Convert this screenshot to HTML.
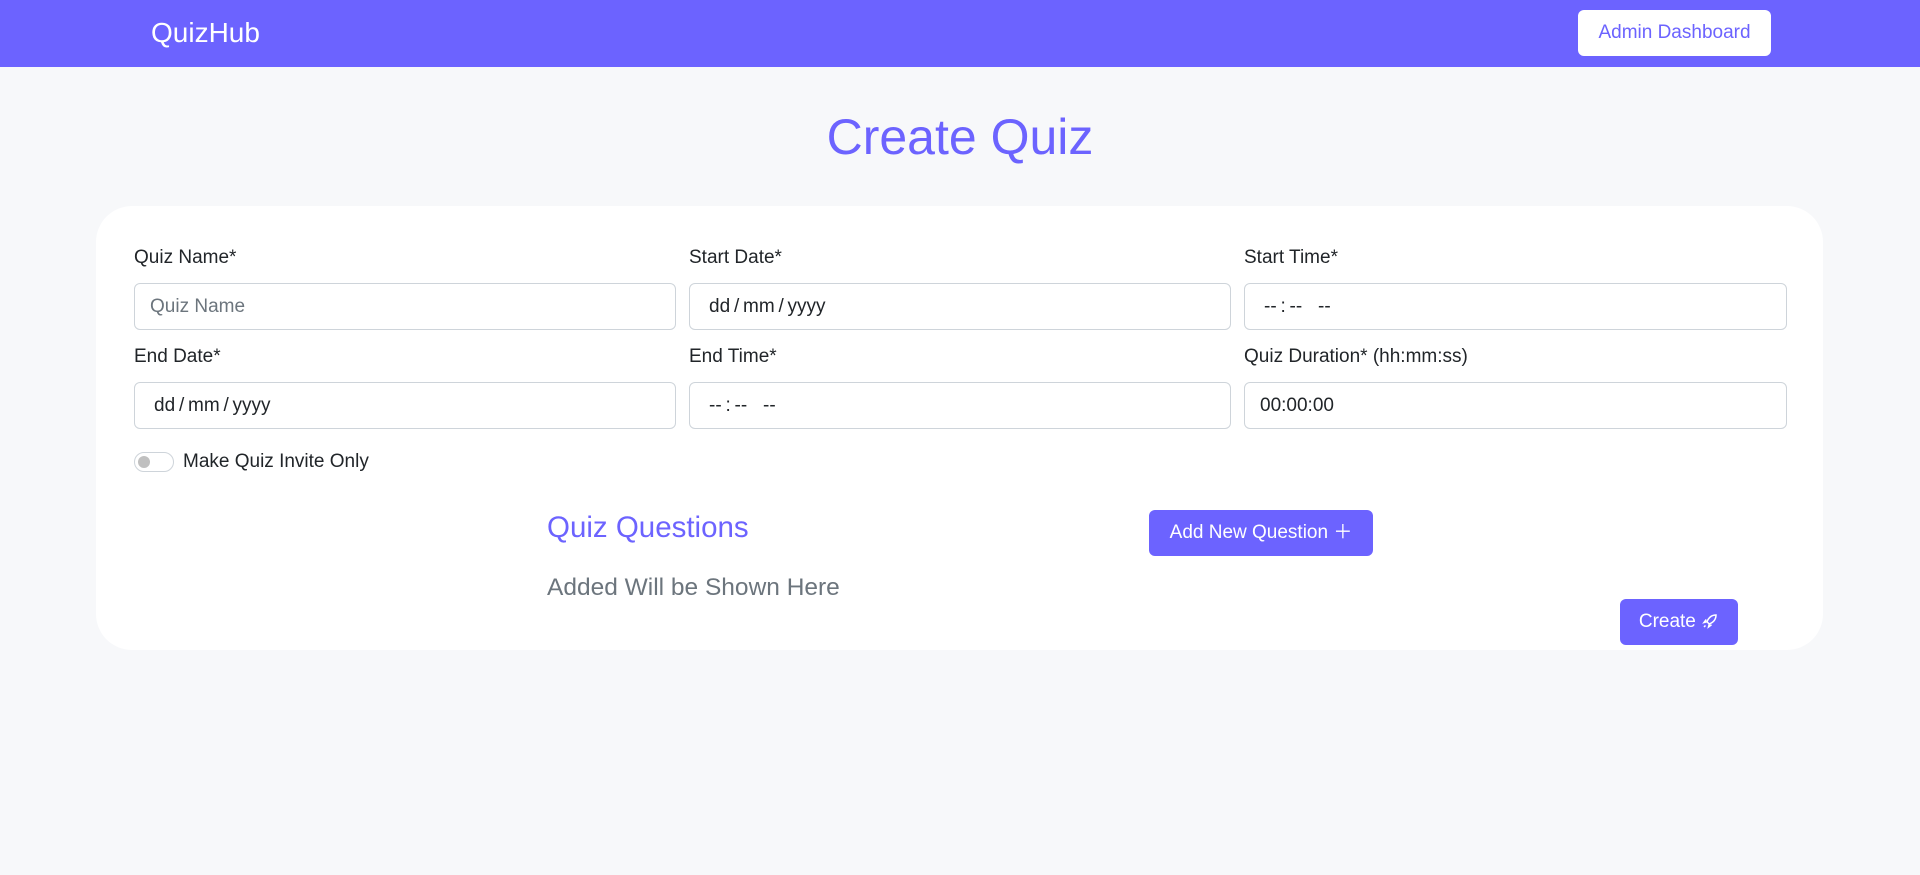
<!DOCTYPE html>
<html><head><style>
*{box-sizing:border-box;margin:0;padding:0}
body{width:1920px;height:875px;background:#f7f8fa;font-family:"Liberation Sans",Arial,sans-serif;position:relative;overflow:hidden;color:#212529}
.nav{position:absolute;left:0;top:0;width:1920px;height:67px;background:#6c63ff}
.brand{position:absolute;left:151px;top:17px;color:#fff;font-size:28px}
.adm{position:absolute;left:1578px;top:10px;width:193px;height:46px;background:#fff;border-radius:6px;color:#6c63ff;font-size:19px;text-align:center;line-height:46px}
h1{position:absolute;left:0;width:1920px;top:108px;text-align:center;font-weight:400;font-size:50px;color:#6c63ff}
.card{position:absolute;left:96px;top:206px;width:1727px;height:444px;background:#fff;border-radius:36px}
.lbl{position:absolute;font-size:19px;color:#212529}
.inp{position:absolute;height:47px;border:1px solid #ced4da;border-radius:6px;font-size:19px;line-height:45px;padding-left:15px;color:#212529;background:#fff}
.btn{position:absolute;background:#6c63ff;color:#fff;border-radius:6px;font-size:19px;text-align:center}
</style></head><body>
<div class="nav"><div class="brand">QuizHub</div><div class="adm">Admin Dashboard</div></div>
<h1>Create Quiz</h1>
<div class="card"></div>
<div class="lbl" style="left:134px;top:247px">Quiz Name*</div>
<div class="lbl" style="left:689px;top:247px">Start Date*</div>
<div class="lbl" style="left:1244px;top:247px">Start Time*</div>
<div class="inp" style="left:134px;top:283px;width:542px;color:#6c757d">Quiz Name</div>
<div class="inp" style="left:689px;top:283px;width:542px;padding-left:19px">dd&thinsp;/&thinsp;mm&thinsp;/&thinsp;yyyy</div>
<div class="inp" style="left:1244px;top:283px;width:543px;padding-left:19px">--&thinsp;:&thinsp;--&nbsp;&nbsp; --</div>
<div class="lbl" style="left:134px;top:346px">End Date*</div>
<div class="lbl" style="left:689px;top:346px">End Time*</div>
<div class="lbl" style="left:1244px;top:346px">Quiz Duration* (hh:mm:ss)</div>
<div class="inp" style="left:134px;top:382px;width:542px;padding-left:19px">dd&thinsp;/&thinsp;mm&thinsp;/&thinsp;yyyy</div>
<div class="inp" style="left:689px;top:382px;width:542px;padding-left:19px">--&thinsp;:&thinsp;--&nbsp;&nbsp; --</div>
<div class="inp" style="left:1244px;top:382px;width:543px">00:00:00</div>
<div style="position:absolute;left:134px;top:452px;width:40px;height:20px;border:1px solid #ced4da;border-radius:10px"><div style="position:absolute;left:3px;top:3px;width:12px;height:12px;border-radius:50%;background:#c0c0c0"></div></div>
<div class="lbl" style="left:183px;top:451px">Make Quiz Invite Only</div>
<div style="position:absolute;left:547px;top:511px;font-size:29.5px;color:#6c63ff">Quiz Questions</div>
<div style="position:absolute;left:547px;top:574px;font-size:24.5px;color:#6c757d">Added Will be Shown Here</div>
<div class="btn" style="left:1149px;top:510px;width:224px;height:46px;line-height:46px">Add New Question ＋</div>
<div class="btn" style="left:1620px;top:599px;width:118px;height:46px;line-height:46px">Create <svg width="18" height="18" viewBox="0 0 24 24" fill="none" stroke="#fff" stroke-width="2" style="vertical-align:-3px"><path d="M20 4c-6 0-10 4-12 9l3 3c5-2 9-6 9-12z"/><path d="M8 13l-4 1 3-4M11 16l-1 4 4-3M6 18l-2 2"/></svg></div>
</body></html>
